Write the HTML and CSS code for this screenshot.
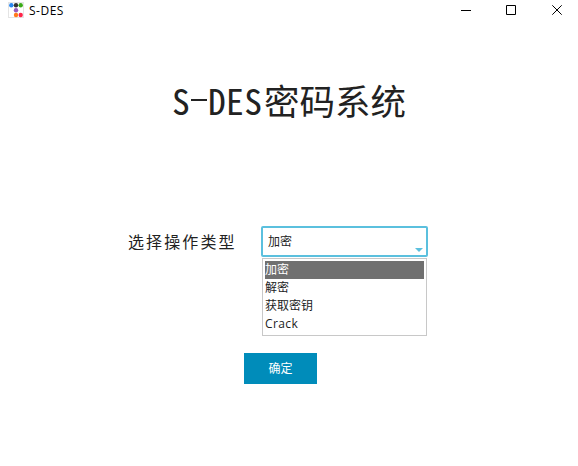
FILE: index.html
```
<!DOCTYPE html>
<html lang="zh-CN">
<head>
<meta charset="utf-8">
<title>S-DES</title>
<link rel="stylesheet" href="styles.css">
</head>
<body>
<header class="titlebar">
  <svg class="app-icon" width="16" height="16" viewBox="0 0 16 16">
    <rect x=".5" y=".5" width="15" height="15" fill="#fff" stroke="#e4e4e4"/>
    <circle cx="3.3" cy="3.3" r="2.2" fill="#2987f0"/>
    <circle cx="8" cy="3.3" r="2.2" fill="#333"/>
    <circle cx="12.7" cy="3.3" r="2.2" fill="#3aab18"/>
    <circle cx="8" cy="8.2" r="2.2" fill="#9859bd"/>
    <circle cx="8" cy="13" r="2.2" fill="#ff7a1a"/>
    <circle cx="12.7" cy="13" r="2.2" fill="#ff2449"/>
  </svg>
  <span class="caption">S-DES</span>
  <div class="controls">
    <svg width="10" height="10" viewBox="0 0 10 10"><path d="M0 5.5H10"/></svg>
    <svg width="10" height="10" viewBox="0 0 10 10"><path d="M.5 .5H9.5V9.5H.5Z"/></svg>
    <svg width="10" height="10" viewBox="0 0 10 10"><path d="M.3 .3L9.7 9.7M9.7 .3L.3 9.7"/></svg>
  </div>
</header>
<main class="content">
  <h1 class="title"><span class="latin">S<i class="dash"></i>DES</span><span>密码系统</span></h1>
  <div class="row">
    <label class="label">选择操作类型</label>
    <div class="combo">
      <div class="field"><span>加密</span><svg class="arrow" width="8" height="4" viewBox="0 0 8 4"><path d="M0 0H8L4 4Z"/></svg></div>
      <ul class="list">
        <li class="active">加密</li>
        <li>解密</li>
        <li>获取密钥</li>
        <li class="wide">Crack</li>
      </ul>
    </div>
  </div>
  <button class="submit">确定</button>
</main>
</body>
</html>
```
FILE: styles.css
```
* { box-sizing: border-box; }
body {
  margin: 0;
  height: 466px;
  overflow: hidden;
  background: #fff;
  color: #222;
  font: 12px/18px "Open Sans", "Noto Sans CJK SC", sans-serif;
}
.titlebar {
  display: flex;
  align-items: center;
  height: 20px;
  padding: 0 16px 0 8px;
  color: #000;
}
.app-icon { margin-right: 5px; }
.caption { line-height: 20px; padding-top: 1px; letter-spacing: .5px; }
.controls { display: flex; gap: 35px; margin-left: auto; }
.controls svg { fill: none; stroke: #000; stroke-width: 1; }
.controls svg:not(:last-child) { margin-left: -1px; margin-right: 1px; }
.content { display: flex; flex-direction: column; }
.title {
  display: flex;
  align-items: center;
  height: 60px;
  margin: 50px 0 0 172px;
  font: 35.5px/60px "Noto Sans CJK SC", sans-serif;
  white-space: nowrap;
}
.latin {
  display: flex;
  align-items: center;
  width: 92px;
  font-feature-settings: "hwid";
  letter-spacing: .3px;
}
.dash { width: 16px; height: 2px; margin: 0 1px; background: #222; }
.row { display: flex; margin: 96px 0 0 128px; }
.label {
  width: 133px;
  font: 16px/30px "Noto Sans CJK SC", sans-serif;
  letter-spacing: 2.1px;
}
.combo { width: 167px; }
.field {
  display: flex;
  justify-content: space-between;
  height: 31px;
  padding: 0 3px 0 5px;
  border: 2px solid #5bc0de;
  border-radius: 2px;
  line-height: 27px;
}
.arrow { margin-top: 20px; fill: #5bc0de; }
.list {
  width: 165px;
  height: 78px;
  margin: 1px 0 0 1px;
  padding: 2px;
  border: 1px solid #c8c8c8;
  list-style: none;
}
.list li { height: 18px; line-height: 18px; }
.list .wide { letter-spacing: .4px; }
.list .active { background: #707070; color: #fff; }
.submit {
  width: 73px;
  height: 31px;
  margin: 17px 0 0 244px;
  padding: 0;
  border: 0;
  background: #008cba;
  color: #fff;
  font: inherit;
}
```
